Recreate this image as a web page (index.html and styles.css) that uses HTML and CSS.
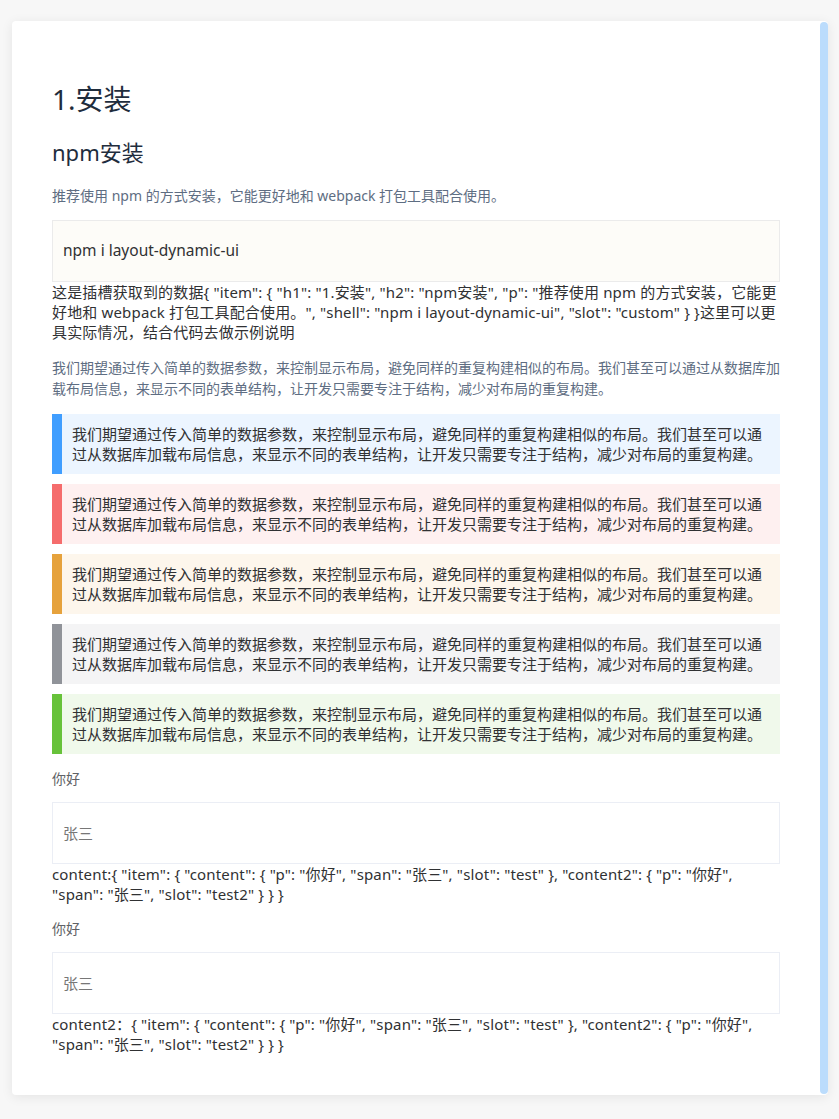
FILE: index.html
```html
<!DOCTYPE html>
<html lang="zh-CN">
<head>
<meta charset="utf-8">
<title>layout-dynamic-ui</title>
<link rel="stylesheet" href="styles.css">
</head>
<body>
<div class="page">
  <div class="card">
    <div class="content">
      <h1 class="title">1.安装</h1>
      <h2 class="subtitle">npm安装</h2>
      <p class="desc">推荐使用 npm 的方式安装，它能更好地和 webpack 打包工具配合使用。</p>
      <div class="shell">npm i layout-dynamic-ui</div>
      <div class="slot-text">这是插槽获取到的数据{ "item": { "h1": "1.安装", "h2": "npm安装", "p": "推荐使用 npm 的方式安装，它能更好地和 webpack 打包工具配合使用。", "shell": "npm i layout-dynamic-ui", "slot": "custom" } }这里可以更具实际情况，结合代码去做示例说明</div>
      <p class="desc desc-long">我们期望通过传入简单的数据参数，来控制显示布局，避免同样的重复构建相似的布局。我们甚至可以通过从数据库加载布局信息，来显示不同的表单结构，让开发只需要专注于结构，减少对布局的重复构建。</p>
      <div class="tip tip-primary">我们期望通过传入简单的数据参数，来控制显示布局，避免同样的重复构建相似的布局。我们甚至可以通过从数据库加载布局信息，来显示不同的表单结构，让开发只需要专注于结构，减少对布局的重复构建。</div>
      <div class="tip tip-danger">我们期望通过传入简单的数据参数，来控制显示布局，避免同样的重复构建相似的布局。我们甚至可以通过从数据库加载布局信息，来显示不同的表单结构，让开发只需要专注于结构，减少对布局的重复构建。</div>
      <div class="tip tip-warning">我们期望通过传入简单的数据参数，来控制显示布局，避免同样的重复构建相似的布局。我们甚至可以通过从数据库加载布局信息，来显示不同的表单结构，让开发只需要专注于结构，减少对布局的重复构建。</div>
      <div class="tip tip-info">我们期望通过传入简单的数据参数，来控制显示布局，避免同样的重复构建相似的布局。我们甚至可以通过从数据库加载布局信息，来显示不同的表单结构，让开发只需要专注于结构，减少对布局的重复构建。</div>
      <div class="tip tip-success">我们期望通过传入简单的数据参数，来控制显示布局，避免同样的重复构建相似的布局。我们甚至可以通过从数据库加载布局信息，来显示不同的表单结构，让开发只需要专注于结构，减少对布局的重复构建。</div>
      <p class="label">你好</p>
      <div class="field">张三</div>
      <div class="slot-text">content:{ "item": { "content": { "p": "你好", "span": "张三", "slot": "test" }, "content2": { "p": "你好", "span": "张三", "slot": "test2" } } }</div>
      <p class="label">你好</p>
      <div class="field">张三</div>
      <div class="slot-text">content2：{ "item": { "content": { "p": "你好", "span": "张三", "slot": "test" }, "content2": { "p": "你好", "span": "张三", "slot": "test2" } } }</div>
    </div>
    <div class="scrollbar"></div>
  </div>
</div>
</body>
</html>
```
FILE: styles.css
```css
html, body {
  margin: 0;
  padding: 0;
  background: #f7f7f7;
}
body {
  font-family: "Noto Sans", "Noto Sans CJK SC", sans-serif;
  color: #303133;
}
.page {
  padding: 21px 11px 25px 12px;
}
.card {
  width: 816px;
  background: #fff;
  border-radius: 4px;
  box-shadow: 0 2px 12px rgba(0, 0, 0, 0.08);
  display: flex;
}
.content {
  flex: 1;
  padding: 40px 40px 41px 40px;
  min-width: 0;
}
.scrollbar {
  width: 8px;
  flex: none;
  background: #bbdcfc;
  border-radius: 4px;
  margin: 1px 0 1px 0;
}
.title {
  margin: 18px 0 0 0;
  font-size: 28px;
  line-height: 40px;
  font-weight: 400;
  color: #1f2d3d;
}
.subtitle {
  margin: 17px 0 17px 0;
  font-size: 22px;
  line-height: 32px;
  font-weight: 400;
  color: #1f2d3d;
}
.desc {
  margin: 14px 0;
  font-size: 14px;
  line-height: 21px;
  color: #5e6d82;
}
.desc-long {
  margin: 15px 0 15px 0;
}
.shell {
  background: #fdfcf8;
  border: 1px solid #ebebeb;
  padding: 19px 10px 20px;
  font-size: 15.5px;
  line-height: 21px;
  color: #303133;
}
.slot-text {
  font-size: 15px;
  letter-spacing: 0.16px;
  line-height: 20px;
  color: #303133;
}
.tip {
  padding: 10px;
  border-left: 10px solid;
  font-size: 15px;
  line-height: 20px;
  color: #303133;
  margin-bottom: 10px;
}
.tip-primary { border-color: #409eff; background: #ecf5ff; }
.tip-danger { border-color: #f56c6c; background: #fef0f0; }
.tip-warning { border-color: #e6a23c; background: #fdf6ec; }
.tip-info { border-color: #909399; background: #f4f4f5; }
.tip-success { border-color: #67c23a; background: #f0f9eb; }
.label {
  margin: 14px 0 13px 0;
  font-size: 14px;
  line-height: 21px;
  color: #606266;
}
.field {
  border: 1px solid #ebeef5;
  padding: 20px 10px;
  font-size: 15px;
  line-height: 20px;
  color: #777;
}
```
